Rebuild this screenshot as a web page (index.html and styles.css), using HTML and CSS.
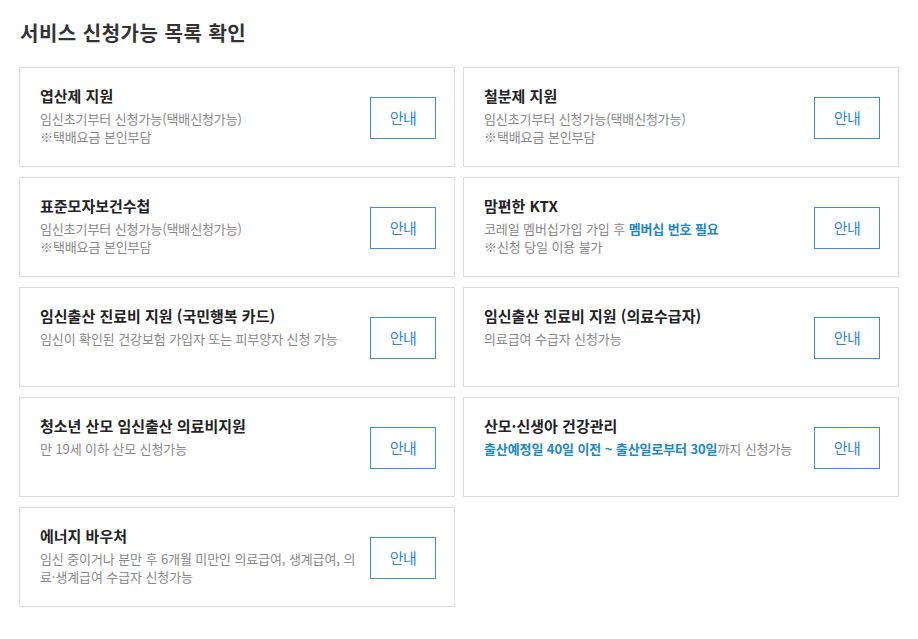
FILE: index.html
```html
<!DOCTYPE html>
<html lang="ko">
<head>
<meta charset="utf-8">
<link rel="stylesheet" href="styles.css">
</head>
<body>
<div class="page">
  <h2 class="page-title">서비스 신청가능 목록 확인</h2>
  <div class="grid">
    <div class="card">
      <div class="info">
        <div class="name">엽산제 지원</div>
        <div class="desc">임신초기부터 신청가능(택배신청가능)<br>※택배요금 본인부담</div>
      </div>
      <button class="btn">안내</button>
    </div>
    <div class="card">
      <div class="info">
        <div class="name">철분제 지원</div>
        <div class="desc">임신초기부터 신청가능(택배신청가능)<br>※택배요금 본인부담</div>
      </div>
      <button class="btn">안내</button>
    </div>
    <div class="card">
      <div class="info">
        <div class="name">표준모자보건수첩</div>
        <div class="desc">임신초기부터 신청가능(택배신청가능)<br>※택배요금 본인부담</div>
      </div>
      <button class="btn">안내</button>
    </div>
    <div class="card">
      <div class="info">
        <div class="name">맘편한 KTX</div>
        <div class="desc">코레일 멤버십가입 가입 후 <strong class="hl">멤버십 번호 필요</strong><br>※신청 당일 이용 불가</div>
      </div>
      <button class="btn">안내</button>
    </div>
    <div class="card">
      <div class="info">
        <div class="name">임신출산 진료비 지원 (국민행복 카드)</div>
        <div class="desc">임신이 확인된 건강보험 가입자 또는 피부양자 신청 가능</div>
      </div>
      <button class="btn">안내</button>
    </div>
    <div class="card">
      <div class="info">
        <div class="name">임신출산 진료비 지원 (의료수급자)</div>
        <div class="desc">의료급여 수급자 신청가능</div>
      </div>
      <button class="btn">안내</button>
    </div>
    <div class="card">
      <div class="info">
        <div class="name">청소년 산모 임신출산 의료비지원</div>
        <div class="desc">만 19세 이하 산모 신청가능</div>
      </div>
      <button class="btn">안내</button>
    </div>
    <div class="card">
      <div class="info">
        <div class="name">산모·신생아 건강관리</div>
        <div class="desc"><strong class="hl">출산예정일 40일 이전 ~ 출산일로부터 30일</strong>까지 신청가능</div>
      </div>
      <button class="btn">안내</button>
    </div>
    <div class="card">
      <div class="info">
        <div class="name">에너지 바우처</div>
        <div class="desc">임신 중이거나 분만 후 6개월 미만인 의료급여, 생계급여, 의<br>료·생계급여 수급자 신청가능</div>
      </div>
      <button class="btn">안내</button>
    </div>
  </div>
</div>
</body>
</html>
```

FILE: styles.css
```css
* { box-sizing: border-box; }
html, body { margin: 0; padding: 0; background: #fff; }
body {
  font-family: "Noto Sans CJK KR", "Noto Sans", sans-serif;
  color: #222;
}
.page { padding: 0 19px; }
.page-title {
  margin: 0 0 19px 1px;
  padding-top: 18px;
  font-size: 20px;
  line-height: 30px;
  font-weight: 700;
  color: #333;
  letter-spacing: 0.5px;
}
.grid {
  display: grid;
  grid-template-columns: repeat(2, minmax(0, 1fr));
  column-gap: 8px;
  row-gap: 10px;
}
.card {
  height: 100px;
  border: 1px solid #dcdcdc;
  display: flex;
  align-items: center;
  padding: 0 18px 0 20px;
  gap: 12px;
  min-width: 0;
}
.info {
  flex: 1;
  align-self: flex-start;
  padding-top: 17px;
  min-width: 0;
  white-space: nowrap;
}
.name {
  font-size: 15px;
  line-height: 22px;
  font-weight: 700;
  color: #222;
  letter-spacing: 0;
  margin-bottom: 3px;
}
.desc {
  font-size: 13px;
  line-height: 18px;
  color: #888;
  letter-spacing: -0.1px;
}
.hl { color: #1b86c8; font-weight: 700; }
.btn {
  flex: none;
  width: 66px;
  height: 42px;
  border: 1px solid #3a8edc;
  background: #fff;
  color: #2e86d8;
  font-family: inherit;
  font-size: 15px;
  letter-spacing: -0.5px;
  padding: 0;
  margin-top: 1px;
  cursor: pointer;
}
```
